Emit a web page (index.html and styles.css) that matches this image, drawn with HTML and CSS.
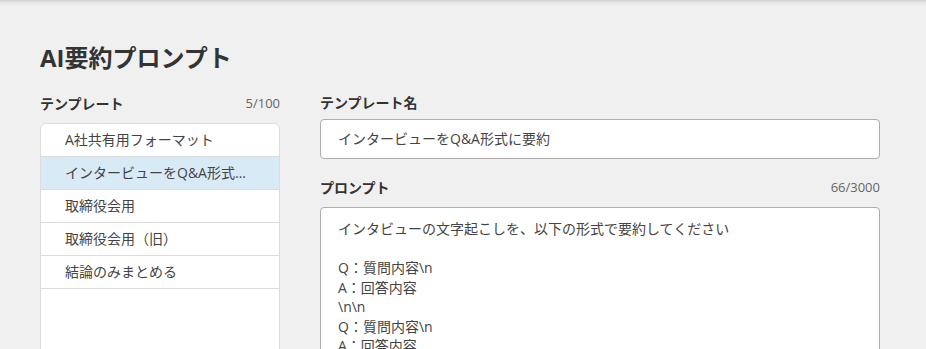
FILE: index.html
```html
<!DOCTYPE html>
<html lang="ja">
<head>
<meta charset="utf-8">
<title>AI要約プロンプト</title>
<link rel="stylesheet" href="styles.css">
</head>
<body>
<main class="page">
  <h1 class="title">AI要約プロンプト</h1>
  <div class="columns">
    <section class="sidebar">
      <div class="row-head">
        <span class="label">テンプレート</span>
        <span class="count">5/100</span>
      </div>
      <ul class="tpl-list">
        <li class="tpl-item">A社共有用フォーマット</li>
        <li class="tpl-item is-active">インタービューをQ&amp;A形式に要約</li>
        <li class="tpl-item">取締役会用</li>
        <li class="tpl-item">取締役会用（旧）</li>
        <li class="tpl-item">結論のみまとめる</li>
      </ul>
    </section>
    <section class="editor">
      <div class="row-head name-head">
        <span class="label">テンプレート名</span>
      </div>
      <div class="field">インタービューをQ&amp;A形式に要約</div>
      <div class="row-head prompt-head">
        <span class="label">プロンプト</span>
        <span class="count">66/3000</span>
      </div>
      <div class="textarea">インタビューの文字起こしを、以下の形式で要約してください

Q：質問内容\n
A：回答内容
\n\n
Q：質問内容\n
A：回答内容</div>
    </section>
  </div>
</main>
</body>
</html>
```

FILE: styles.css
```css
html, body {
  margin: 0;
  padding: 0;
  overflow: hidden;
}
body {
  background-color: #f0f0f0;
  background-image: linear-gradient(to bottom, #cbcbcb 0, #e4e4e4 2px, #f0f0f0 6px);
  background-repeat: no-repeat;
  background-size: 100% 6px;
  font-family: "Open Sans", "Noto Sans CJK JP", sans-serif;
  color: #333;
}
.page {
  padding: 42px 46px 0 40px;
}
.title {
  margin: 0 0 19px;
  font-size: 24px;
  line-height: 32px;
  font-weight: 700;
  color: #333;
}
.columns {
  display: grid;
  grid-template-columns: 240px 560px;
  column-gap: 40px;
}
.row-head {
  display: flex;
  justify-content: space-between;
  align-items: center;
  height: 20px;
  margin-bottom: 10px;
}
.label {
  font-size: 14px;
  font-weight: 700;
  color: #333;
}
.count {
  font-size: 13px;
  color: #666;
}
.tpl-list {
  list-style: none;
  margin: 0;
  padding: 0;
  background: #fff;
  border: 1px solid #dcdcdc;
  border-radius: 6px;
  min-height: 320px;
  overflow: hidden;
}
.tpl-item {
  height: 32px;
  line-height: 32px;
  padding: 0 29px 0 24px;
  border-bottom: 1px solid #dcdcdc;
  font-size: 14px;
  color: #444;
  white-space: nowrap;
  overflow: hidden;
  text-overflow: ellipsis;
}
.tpl-item.is-active {
  background: #d9eaf7;
}
.editor {
  margin-top: -1px;
}
.name-head {
  margin-bottom: 7px;
}
.field {
  height: 38px;
  line-height: 38px;
  padding: 0 17px;
  background: #fff;
  border: 1px solid #adadad;
  border-radius: 4px;
  font-size: 14px;
  color: #444;
}
.prompt-head {
  margin-top: 18px;
}
.textarea {
  min-height: 260px;
  padding: 11px 17px;
  background: #fff;
  border: 1px solid #adadad;
  border-radius: 4px;
  font-size: 14px;
  line-height: 19.5px;
  color: #444;
  white-space: pre-wrap;
}
```
